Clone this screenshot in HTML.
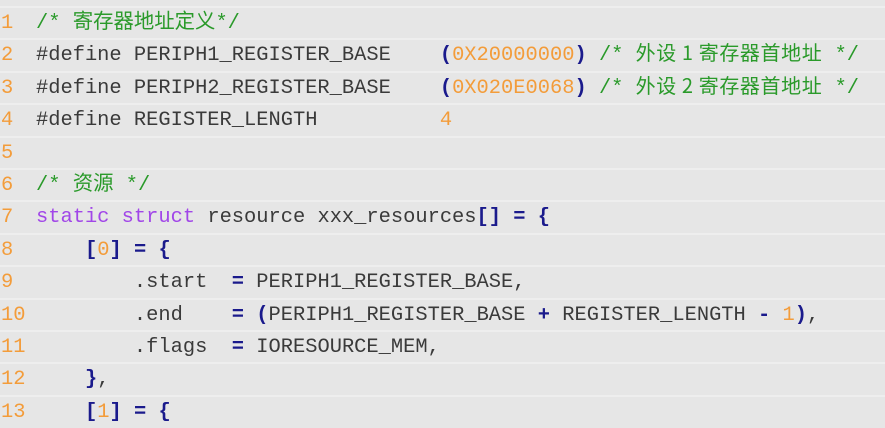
<!DOCTYPE html>
<html><head><meta charset="utf-8"><style>
html,body{margin:0;padding:0;background:#e6e6e6;width:885px;height:427px;overflow:hidden}
.wrap{position:absolute;left:0;width:885px}
.r{height:30.4px;border-top:2px solid #eeeeee;position:relative;font-family:"Liberation Mono","Noto Sans CJK SC",monospace;font-size:20.4px;line-height:31px;white-space:pre;color:#3a3a3a}
.r:first-child{border-top:2px solid #e6e6e6}
.n{position:absolute;left:1px;top:0;color:#f39c3a}
.c{position:absolute;left:36px;top:0}
.g{color:#2a9a2a}
.cj{font-family:"Noto Sans CJK SC",sans-serif;font-size:20px;line-height:0;letter-spacing:0.6px}
.k{color:#a146e8}
.o{color:#1a1a8c;font-weight:bold}
.d{color:#f39c3a}
</style></head><body><div class="wrap" style="top:-26.4px">
<div class="r"><span class="n"></span><span class="c"></span></div>
<div class="r"><span class="n">1</span><span class="c"><span class="g">/* 寄存器地址定义*/</span></span></div>
<div class="r"><span class="n">2</span><span class="c">#define PERIPH1_REGISTER_BASE    <span class="o">(</span><span class="d">0X20000000</span><span class="o">)</span> <span class="g">/* <span class="cj">外设 1 寄存器首地址</span> */</span></span></div>
<div class="r"><span class="n">3</span><span class="c">#define PERIPH2_REGISTER_BASE    <span class="o">(</span><span class="d">0X020E0068</span><span class="o">)</span> <span class="g">/* <span class="cj">外设 2 寄存器首地址</span> */</span></span></div>
<div class="r"><span class="n">4</span><span class="c">#define REGISTER_LENGTH          <span class="d">4</span></span></div>
<div class="r"><span class="n">5</span><span class="c"></span></div>
<div class="r"><span class="n">6</span><span class="c"><span class="g">/* 资源 */</span></span></div>
<div class="r"><span class="n">7</span><span class="c"><span class="k">static</span> <span class="k">struct</span> resource xxx_resources<span class="o">[]</span> <span class="o">=</span> <span class="o">{</span></span></div>
<div class="r"><span class="n">8</span><span class="c">    <span class="o">[</span><span class="d">0</span><span class="o">]</span> <span class="o">=</span> <span class="o">{</span></span></div>
<div class="r"><span class="n">9</span><span class="c">        .start  <span class="o">=</span> PERIPH1_REGISTER_BASE,</span></div>
<div class="r"><span class="n">10</span><span class="c">        .end    <span class="o">=</span> <span class="o">(</span>PERIPH1_REGISTER_BASE <span class="o">+</span> REGISTER_LENGTH <span class="o">-</span> <span class="d">1</span><span class="o">)</span>,</span></div>
<div class="r"><span class="n">11</span><span class="c">        .flags  <span class="o">=</span> IORESOURCE_MEM,</span></div>
<div class="r"><span class="n">12</span><span class="c">    <span class="o">}</span>,</span></div>
<div class="r"><span class="n">13</span><span class="c">    <span class="o">[</span><span class="d">1</span><span class="o">]</span> <span class="o">=</span> <span class="o">{</span></span></div>
</div></body></html>
